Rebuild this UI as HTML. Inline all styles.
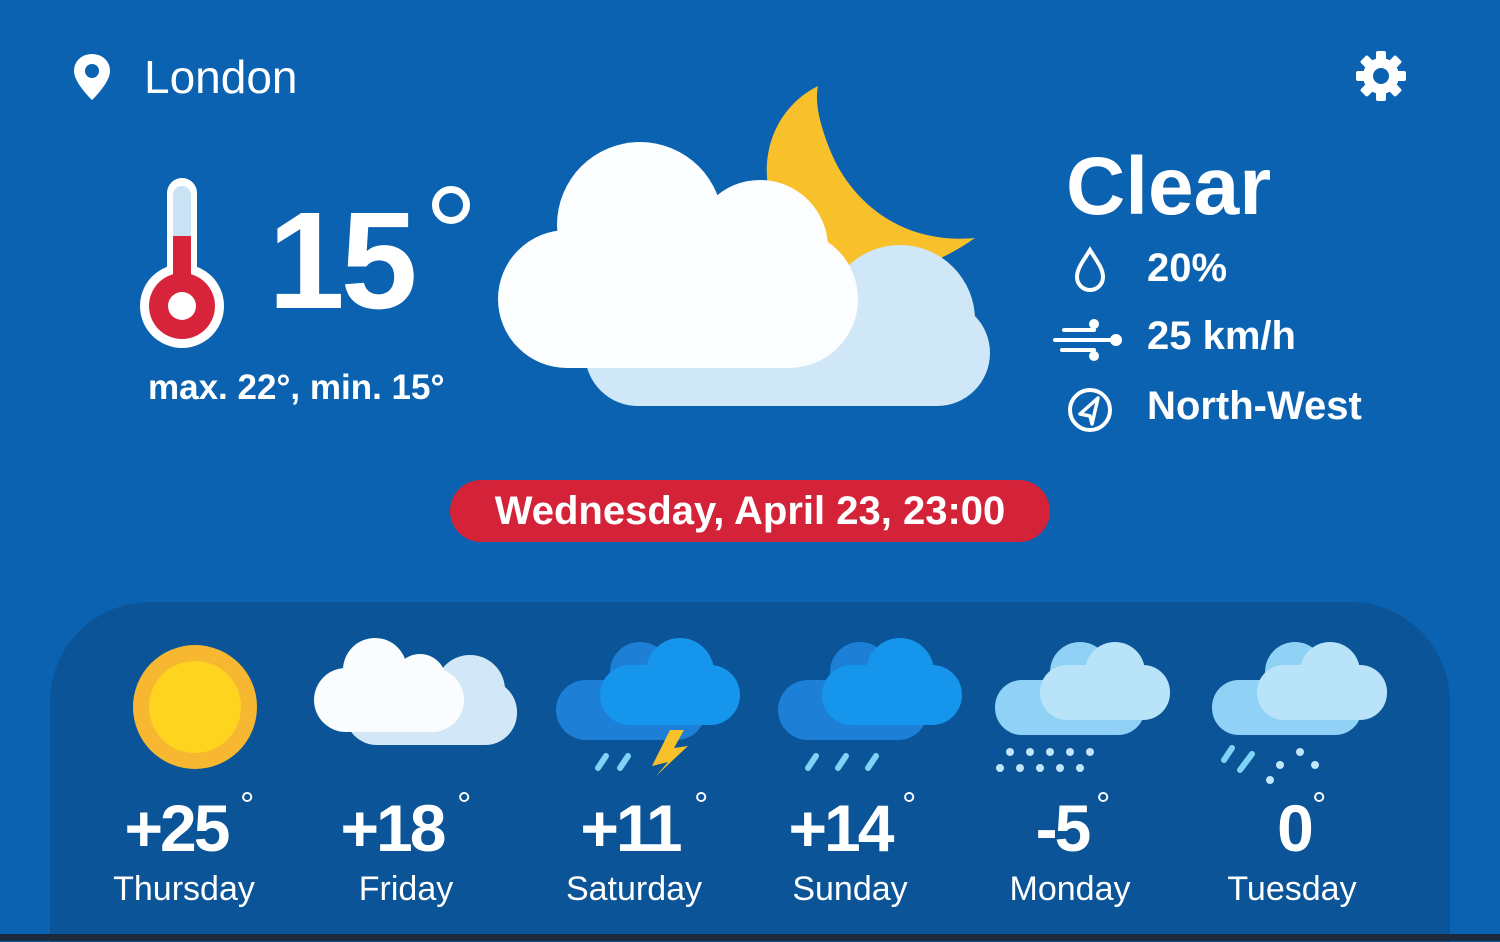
<!DOCTYPE html>
<html><head><style>
body{margin:0;width:1500px;height:941px;overflow:hidden;background:#0b62b0;font-family:"Liberation Sans",sans-serif;color:#fff;position:relative}
.a{position:absolute}
.panel{left:50px;top:602px;width:1400px;height:340px;background:#0a5497;border-radius:100px 100px 0 0}
.t{font-size:66px;font-weight:bold;text-align:center;width:200px;top:790px;letter-spacing:-3px}
.d{font-size:34px;text-align:center;width:200px;top:870px}
</style></head><body>
<div class="a panel"></div>
<div class="a" style="left:0;top:934px;width:1500px;height:7px;background:#1c2a3c"></div>
<svg class="a" style="left:70px;top:52px" width="44" height="50" viewBox="0 0 44 50"><path d="M22 2C12 2 4 9 4 19c0 12 18 29 18 29s18-17 18-29C40 9 32 2 22 2z" fill="#fff"/><circle cx="22" cy="19" r="7" fill="#0b62b0"/></svg>
<div class="a" style="left:144px;top:50px;font-size:46px">London</div>
<svg class="a" style="left:1355px;top:50px" width="52" height="52" viewBox="0 0 52 52"><g fill="#fff"><circle cx="26" cy="26" r="18"/><g id="g"><rect x="21" y="1" width="10" height="50" rx="2"/></g><use href="#g" transform="rotate(45 26 26)"/><use href="#g" transform="rotate(90 26 26)"/><use href="#g" transform="rotate(135 26 26)"/></g><circle cx="26" cy="26" r="8" fill="#0b62b0"/></svg>
<svg class="a" style="left:138px;top:176px" width="88" height="176" viewBox="0 0 88 176"><rect x="29" y="2" width="30" height="130" rx="15" fill="#fff"/><circle cx="44" cy="130" r="42" fill="#fff"/><rect x="35" y="10" width="18" height="120" rx="9" fill="#c9e3f5"/><rect x="35" y="60" width="18" height="70" fill="#d8243a"/><circle cx="44" cy="130" r="33" fill="#d8243a"/><circle cx="44" cy="130" r="14" fill="#fff"/></svg>
<div class="a" style="left:268px;top:182px;font-size:138px;font-weight:bold;letter-spacing:-4px">15</div>
<div class="a" style="left:432px;top:186px;width:24px;height:24px;border:7px solid #fff;border-radius:50%"></div>
<div class="a" style="left:148px;top:368px;font-size:35px;font-weight:bold">max. 22°, min. 15°</div>
<svg class="a" style="left:490px;top:80px" width="500" height="330" viewBox="490 80 500 330">
<path d="M818 86C770 110 752 170 780 220c30 55 110 78 195 18C900 245 850 200 830 150 818 120 815 100 818 86z" fill="#f8c12c"/>
<g fill="#cfe7f6"><rect x="585" y="300" width="405" height="106" rx="53"/><circle cx="900" cy="320" r="75"/><circle cx="760" cy="310" r="80"/></g>
<g fill="#fbfdff"><rect x="498" y="230" width="360" height="138" rx="69"/><circle cx="640" cy="225" r="83"/><circle cx="760" cy="248" r="68"/></g>
</svg>
<div class="a" style="left:1066px;top:140px;font-size:82px;font-weight:bold">Clear</div>
<svg class="a" style="left:1072px;top:246px" width="36" height="48" viewBox="0 0 36 48"><path d="M18 4C12 14 5 22 5 31a13 13 0 0 0 26 0C31 22 24 14 18 4z" fill="none" stroke="#fff" stroke-width="4"/></svg>
<div class="a" style="left:1147px;top:246px;font-size:40px;font-weight:bold">20%</div>
<svg class="a" style="left:1052px;top:314px" width="76" height="50" viewBox="0 0 76 50"><g stroke="#fff" stroke-width="4" fill="none" stroke-linecap="round"><path d="M12 16h30"/><path d="M3 26h60"/><path d="M10 36h32"/></g><g fill="#fff"><circle cx="42" cy="10" r="5"/><circle cx="64" cy="26" r="6"/><circle cx="42" cy="42" r="5"/></g></svg>
<div class="a" style="left:1147px;top:314px;font-size:40px;font-weight:bold">25 km/h</div>
<svg class="a" style="left:1066px;top:386px" width="48" height="48" viewBox="0 0 48 48"><circle cx="24" cy="24" r="20" fill="none" stroke="#fff" stroke-width="4"/><path d="M32 12L14 28l10 2 2 8z" fill="none" stroke="#fff" stroke-width="3.5" stroke-linejoin="round"/></svg>
<div class="a" style="left:1147px;top:384px;font-size:40px;font-weight:bold">North-West</div>
<div class="a" style="left:450px;top:480px;width:600px;height:62px;border-radius:31px;background:#d42338;text-align:center;line-height:62px;font-size:40px;font-weight:bold">Wednesday, April 23, 23:00</div>
<svg class="a" style="left:0;top:600px" width="1500" height="200" viewBox="0 600 1500 200">
<circle cx="195" cy="707" r="62" fill="#f7b731"/><circle cx="195" cy="707" r="46" fill="#fed41f"/>
<g fill="#d2e8f7"><rect x="345" y="680" width="172" height="65" rx="32"/><circle cx="470" cy="690" r="35"/></g>
<g fill="#fafcfe"><rect x="314" y="668" width="150" height="64" rx="32"/><circle cx="375" cy="670" r="32"/><circle cx="420" cy="680" r="26"/></g>
<g fill="#1d7fd6"><rect x="556" y="680" width="150" height="60" rx="30"/><circle cx="640" cy="672" r="30"/></g>
<g fill="#1596ec"><rect x="600" y="665" width="140" height="60" rx="30"/><circle cx="680" cy="672" r="34"/></g>
<path d="M670 730l-18 36 16-4-12 14 32-30-14 2 10-18z" fill="#f8c12c"/>
<g stroke="#7fd3f7" stroke-width="6" stroke-linecap="round"><path d="M598 768l8-12M620 768l8-12M808 768l8-12M838 768l8-12M868 768l8-12M1224 760l8-12M1240 770l12-16"/></g>
<g fill="#1d7fd6"><rect x="778" y="680" width="150" height="60" rx="30"/><circle cx="860" cy="672" r="30"/></g>
<g fill="#1596ec"><rect x="822" y="665" width="140" height="60" rx="30"/><circle cx="900" cy="672" r="34"/></g>
<g fill="#8fd2f5"><rect x="995" y="680" width="150" height="55" rx="27"/><circle cx="1080" cy="672" r="30"/></g>
<g fill="#b8e3f9"><rect x="1040" y="665" width="130" height="55" rx="27"/><circle cx="1115" cy="672" r="30"/></g>
<g fill="#8fd2f5"><rect x="1212" y="680" width="150" height="55" rx="27"/><circle cx="1295" cy="672" r="30"/></g>
<g fill="#b8e3f9"><rect x="1257" y="665" width="130" height="55" rx="27"/><circle cx="1330" cy="672" r="30"/></g>
<g fill="#bfe6fa"><circle cx="1000" cy="768" r="4"/><circle cx="1020" cy="768" r="4"/><circle cx="1040" cy="768" r="4"/><circle cx="1060" cy="768" r="4"/><circle cx="1080" cy="768" r="4"/><circle cx="1010" cy="752" r="4"/><circle cx="1030" cy="752" r="4"/><circle cx="1050" cy="752" r="4"/><circle cx="1070" cy="752" r="4"/><circle cx="1090" cy="752" r="4"/><circle cx="1280" cy="765" r="4"/><circle cx="1300" cy="752" r="4"/><circle cx="1315" cy="765" r="4"/><circle cx="1270" cy="780" r="4"/></g>
</svg>
<div class="a t" style="left:76px">+25</div><div class="a d" style="left:84px">Thursday</div>
<div class="a t" style="left:292px">+18</div><div class="a d" style="left:306px">Friday</div>
<div class="a t" style="left:530px">+11</div><div class="a d" style="left:534px">Saturday</div>
<div class="a t" style="left:740px">+14</div><div class="a d" style="left:750px">Sunday</div>
<div class="a t" style="left:962px">-5</div><div class="a d" style="left:970px">Monday</div>
<div class="a t" style="left:1194px">0</div><div class="a d" style="left:1192px">Tuesday</div>
<div class="a" style="left:240px;top:784px;font-size:36px">°</div>
<div class="a" style="left:457px;top:784px;font-size:36px">°</div>
<div class="a" style="left:694px;top:784px;font-size:36px">°</div>
<div class="a" style="left:902px;top:784px;font-size:36px">°</div>
<div class="a" style="left:1096px;top:784px;font-size:36px">°</div>
<div class="a" style="left:1312px;top:784px;font-size:36px">°</div>
</body></html>
